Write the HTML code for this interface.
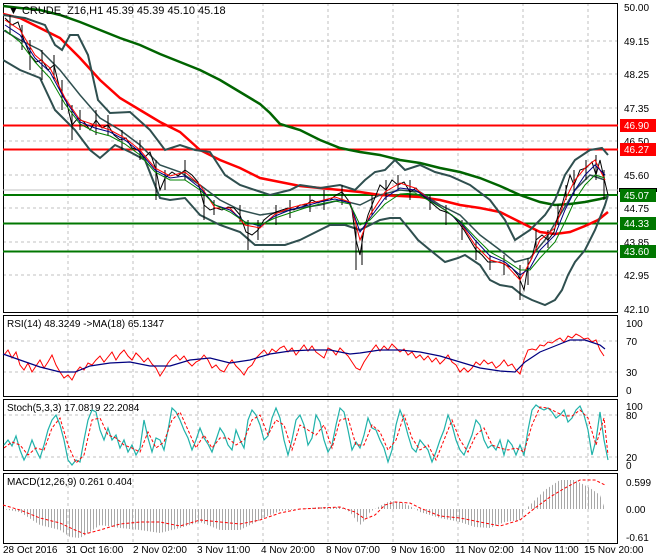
<!DOCTYPE html>
<html><head><meta charset="utf-8"><style>
html,body{margin:0;padding:0;background:#fff;}
svg{display:block;font-family:"Liberation Sans",sans-serif;}
</style></head><body>
<svg width="660" height="560" viewBox="0 0 660 560" xmlns="http://www.w3.org/2000/svg">
<defs>
<pattern id="hist" width="3" height="10" patternUnits="userSpaceOnUse"><rect x="0" y="0" width="1" height="10" fill="#a8a8a8"/></pattern>
<clipPath id="cm"><rect x="3" y="3" width="615" height="309"/></clipPath>
</defs>
<rect width="660" height="560" fill="#fff"/>
<!-- grid -->
<g stroke="#c0c0c0" stroke-dasharray="3,3" stroke-width="1">
<path d="M68 3V312M133 3V312M198 3V312M263 3V312M328 3V312M393 3V312M458 3V312M523 3V312M588 3V312"/>
<path d="M68 315V396M133 315V396M198 315V396M263 315V396M328 315V396M393 315V396M458 315V396M523 315V396M588 315V396"/>
<path d="M68 399V470M133 399V470M198 399V470M263 399V470M328 399V470M393 399V470M458 399V470M523 399V470M588 399V470"/>
<path d="M68 473V543M133 473V543M198 473V543M263 473V543M328 473V543M393 473V543M458 473V543M523 473V543M588 473V543"/>
<path d="M3 41H618M3 74H618M3 108H618M3 141H618M3 175H618M3 208H618M3 242H618M3 275H618"/>
<path d="M3 341H618M3 372H618M3 415H618M3 457H618"/>
</g>
<!-- pane borders -->
<g fill="none" stroke="#000" stroke-width="1">
<rect x="3.5" y="3.5" width="614" height="309"/>
<rect x="3.5" y="315.5" width="614" height="81"/>
<rect x="3.5" y="399.5" width="614" height="71"/>
<rect x="3.5" y="473.5" width="614" height="70"/>
</g>
<g clip-path="url(#cm)" fill="none">
<!-- horizontal levels -->
<path d="M3 125.5H618M3 149.5H618" stroke="#ff0000" stroke-width="2"/>
<path d="M3 195H618M3 223.5H618M3 251.5H618" stroke="#007700" stroke-width="2"/>
<path d="M3 190H618" stroke="#c0c0c0"/>
<!-- MAs -->
<polyline stroke="#006400" stroke-width="2.5" points="3,6 20,8 40,10 60,15 80,22 100,30 120,38 140,45 160,54 180,62 200,70 220,80 240,92 260,104 270,113 280,124 300,130 320,140 340,148 360,152 380,155 400,160 420,163 440,168 460,172 480,178 500,186 520,195 540,202 555,205 570,204 585,202 600,199 608,197"/>
<polyline stroke="#ff0000" stroke-width="2.5" points="3,14 20,18 40,28 60,38 80,58 100,80 120,98 140,110 160,122 180,132 200,150 220,160 240,168 260,178 280,182 300,186 320,188 340,190 360,192 380,195 400,196 420,197 440,200 460,205 480,208 500,212 520,222 540,232 555,234 570,232 585,226 598,220 608,212"/>
<!-- bollinger -->
<polyline stroke="#2f4f4f" stroke-width="2" points="3,15 25,18 45,25 55,45 62,50 70,35 78,35 88,55 98,100 110,113 130,112 150,130 165,150 180,145 195,150 210,152 225,175 240,185 255,190 270,195 290,190 300,185 320,188 340,185 355,190 365,180 375,172 385,170 395,160 405,170 420,165 435,172 450,176 470,185 490,200 505,220 515,240 530,230 545,215 555,200 565,175 575,160 590,150 602,148 608,155"/>
<polyline stroke="#2f4f4f" stroke-width="2" points="3,60 20,70 40,78 55,110 65,120 75,130 90,150 100,158 115,145 130,152 145,160 160,198 170,200 185,198 200,215 220,225 240,232 255,245 270,245 285,245 300,240 310,235 330,225 345,225 360,230 370,225 380,220 390,218 400,218 410,230 418,240 430,250 445,262 458,258 465,255 480,265 490,280 500,285 512,287 522,295 532,300 545,305 555,300 562,290 568,275 575,262 585,250 595,230 605,205 608,195"/>
<polyline stroke="#2f4f4f" stroke-width="1.5" points="3,30 20,40 40,50 60,70 80,95 100,118 120,130 140,145 160,165 180,172 200,185 220,200 240,210 260,215 280,212 300,208 320,205 340,200 360,205 380,195 400,190 420,192 440,205 460,215 480,235 500,250 515,262 530,258 545,240 560,215 575,190 590,175 605,180"/>
<!-- price bars -->
<polyline stroke="#000" stroke-width="1" points="5,18 12,25 18,22 24,40 30,55 36,62 42,60 48,70 54,65 60,90 66,100 72,125 78,118 84,122 90,130 96,120 102,128 108,125 114,135 120,140 126,138 132,148 138,150 144,158 150,152 156,170 160,190 165,178 172,172 178,176 185,170 192,175 198,182 204,205 210,210 216,208 222,210 228,207 234,208 240,215 246,232 252,235 258,230 264,220 270,215 276,212 282,210 288,208 294,210 300,205 306,205 312,200 318,203 324,200 330,200 336,195 342,192 348,200 352,210 356,240 360,255 364,230 368,215 374,200 380,185 386,190 392,180 398,185 404,182 410,192 416,188 422,195 428,200 434,205 440,210 446,212 452,215 458,222 464,230 470,240 476,250 482,255 488,262 494,262 500,262 506,265 512,268 518,275 524,290 528,265 532,258 536,240 542,235 548,240 554,232 558,215 562,205 566,190 570,175 574,185 580,170 586,168 592,162 596,175 600,160 604,178 608,195"/>
<path stroke="#000" d="M10 15V35M22 25V50M30 40V70M42 50V80M54 55V80M62 80V110M72 105V140M80 110V130M96 110V135M108 115V135M122 130V150M140 140V160M156 160V200M165 170V190M185 160V180M204 190V220M214 200V215M240 205V222M248 220V250M258 220V240M276 205V225M290 200V218M310 195V212M324 190V210M342 185V205M356 225V270M362 235V265M372 195V215M386 180V200M398 175V190M410 180V200M430 195V210M446 205V225M462 220V240M476 240V260M490 255V270M504 255V275M520 265V300M528 258V285M536 230V250M548 230V248M558 205V225M566 185V200M574 170V195M586 160V180M596 155V180M604 170V200"/>
<polyline stroke="#ff0000" stroke-width="1" points="5,20 20,30 35,55 50,68 65,98 80,120 95,125 110,130 125,138 140,150 155,168 170,176 185,172 200,185 215,208 230,208 245,225 260,228 275,214 290,208 305,204 320,201 335,197 350,202 360,240 370,215 385,192 400,183 415,188 430,200 445,210 460,222 475,245 490,260 505,264 520,280 530,262 540,240 555,228 565,200 575,180 585,168 595,160 605,180"/>
<polyline stroke="#000080" stroke-width="1" points="5,25 20,35 35,58 50,72 65,100 80,122 95,128 110,132 125,140 140,152 155,170 170,178 185,176 200,188 215,205 230,210 245,222 260,226 275,216 290,210 305,206 320,202 335,199 350,203 360,232 370,218 385,198 400,188 415,190 430,200 445,210 460,222 475,240 490,256 505,262 520,275 530,268 540,250 555,235 565,210 575,190 585,175 595,165 605,175"/>
<polyline stroke="#008000" stroke-width="1" points="5,30 20,42 35,62 50,78 65,104 80,124 95,132 110,136 125,144 140,155 155,172 170,180 185,180 200,190 215,205 230,212 245,222 260,225 275,218 290,213 305,208 320,204 335,201 350,204 360,225 370,220 385,204 400,194 415,193 430,201 445,210 460,221 475,237 490,252 505,260 520,270 530,270 540,258 555,242 565,222 575,200 585,185 595,175 605,178"/>
</g>
<text x="8" y="14" font-size="11" fill="#000">▼ CRUDE_Z16,H1  45.39 45.39 45.10 45.18</text>
<!-- price axis -->
<g font-size="10" fill="#000">
<text x="624" y="11">50.00</text><text x="624" y="45">49.15</text><text x="624" y="78">48.25</text><text x="624" y="112">47.35</text><text x="624" y="145">46.50</text><text x="624" y="179">45.60</text><text x="624" y="212">44.75</text><text x="624" y="246">43.85</text><text x="624" y="279">42.95</text><text x="624" y="313">42.10</text>
</g>
<rect x="619" y="188" width="38" height="4" fill="#000"/>
<rect x="620" y="119" width="36" height="13" fill="#ff0000"/><text x="624" y="129" font-size="10" fill="#fff">46.90</text>
<rect x="620" y="143" width="36" height="13" fill="#ff0000"/><text x="624" y="153" font-size="10" fill="#fff">46.27</text>
<rect x="620" y="189" width="36" height="13" fill="#007700"/><text x="624" y="199" font-size="10" fill="#fff">45.07</text>
<rect x="620" y="217" width="36" height="13" fill="#007700"/><text x="624" y="227" font-size="10" fill="#fff">44.33</text>
<rect x="620" y="245" width="36" height="13" fill="#007700"/><text x="624" y="255" font-size="10" fill="#fff">43.60</text>
<!-- RSI -->
<text x="7" y="327" font-size="10">RSI(14) 48.3249  -&gt;MA(18) 65.1347</text>
<polyline fill="none" stroke="#ff0000" points="4,355 8,350 12,358 16,352 20,365 24,370 28,363 32,372 36,366 40,360 44,368 48,362 52,355 56,365 60,372 64,378 68,375 72,380 76,372 80,367 84,370 88,363 92,365 96,360 100,356 104,362 108,357 112,352 116,360 120,354 124,350 128,356 132,360 136,353 140,357 144,362 148,358 152,364 156,368 160,376 164,370 168,363 172,358 176,355 180,360 184,356 188,362 192,366 196,362 200,360 204,355 208,360 212,368 216,365 220,370 224,372 228,365 232,360 236,366 240,370 244,375 248,368 252,365 256,358 260,354 264,350 268,355 272,349 276,352 280,348 284,346 288,352 292,348 296,355 300,350 304,345 308,351 312,346 316,352 320,355 324,358 328,348 332,350 336,355 340,348 344,352 348,356 352,362 356,368 360,370 364,362 368,356 372,350 376,345 380,351 384,346 388,350 392,344 396,348 400,352 404,349 408,355 412,352 416,358 420,355 424,360 428,356 432,362 436,358 440,364 444,360 448,355 452,362 456,365 460,372 464,368 468,372 472,368 476,362 480,365 484,360 488,364 492,362 496,368 500,365 504,360 508,366 512,364 516,370 520,374 524,360 528,350 532,349 536,350 540,345 544,346 548,342 552,343 556,340 560,338 564,342 568,336 572,338 576,334 580,336 584,339 588,338 592,342 596,340 600,350 604,356"/>
<polyline fill="none" stroke="#000080" stroke-width="1.2" points="3,354 20,360 40,367 60,372 75,372 90,366 110,363 130,362 150,366 170,366 190,360 210,358 230,363 250,360 270,354 290,351 310,350 330,350 350,354 360,353 380,350 400,350 420,352 440,356 460,362 480,368 500,371 515,372 525,362 540,352 555,346 570,340 585,340 600,345 605,349"/>
<g font-size="10"><text x="626" y="327">100</text><text x="626" y="345">70</text><text x="626" y="376">30</text><text x="626" y="394">0</text></g>
<!-- Stoch -->
<text x="7" y="411" font-size="10">Stoch(5,3,3) 17.0819 22.2084</text>
<polyline fill="none" stroke="#20b2aa" stroke-width="1.2" points="4,445 8,440 12,446 16,436 20,450 24,460 28,452 32,440 36,450 40,458 44,445 48,430 52,420 56,415 60,425 64,440 68,460 72,465 76,460 80,462 84,440 88,420 92,410 96,412 100,430 104,440 108,428 112,440 116,435 120,448 124,440 128,452 132,445 136,455 140,448 144,420 148,438 152,452 156,438 160,440 164,450 168,430 172,408 176,412 180,420 184,430 188,438 192,450 196,440 200,428 204,438 208,444 212,452 216,440 220,428 224,434 228,445 232,450 236,430 240,440 244,448 248,420 252,410 256,415 260,425 264,440 268,436 272,418 276,408 280,418 284,440 288,455 292,440 296,420 300,415 304,425 308,445 312,438 316,415 320,422 324,440 328,452 332,445 336,425 340,408 344,412 348,430 352,450 356,442 360,448 364,435 368,418 372,428 376,430 380,440 384,448 388,462 392,450 396,425 400,410 404,420 408,435 412,448 416,452 420,440 424,445 428,450 432,462 436,452 440,440 444,430 448,415 452,425 456,440 460,450 464,455 468,445 472,435 476,420 480,425 484,440 488,448 492,445 496,450 500,440 504,455 508,440 512,445 516,455 520,445 524,455 528,430 532,410 536,405 540,408 544,410 548,408 552,412 556,418 560,415 564,410 568,422 572,418 576,410 580,406 584,415 588,430 592,455 596,440 600,412 604,440 608,460"/>
<polyline fill="none" stroke="#ff0000" stroke-dasharray="3,2" points="4,448 12,442 20,445 28,455 36,448 44,450 52,428 60,418 68,445 76,463 84,455 92,420 100,418 108,435 116,438 124,445 132,448 140,452 148,432 156,448 164,442 172,420 180,412 188,430 196,448 204,435 212,448 220,438 228,438 236,445 244,440 252,420 260,415 268,435 276,420 284,425 292,450 300,425 308,430 316,435 324,425 332,448 340,420 348,418 356,445 364,445 372,425 380,432 388,450 396,440 404,415 412,438 420,450 428,445 436,460 444,440 452,420 460,440 468,452 476,435 484,428 492,445 500,448 508,450 516,448 524,452 532,425 540,407 548,408 556,412 564,416 572,416 580,410 588,418 596,445 604,418 608,455"/>
<g font-size="10"><text x="626" y="410">100</text><text x="626" y="419">80</text><text x="626" y="461">20</text><text x="626" y="469">0</text></g>
<!-- MACD -->
<text x="7" y="485" font-size="10">MACD(12,26,9) 0.261 0.404</text>
<polygon fill="url(#hist)" points="3,509 20,512 40,525 60,530 70,537 80,538 90,532 100,525 120,528 140,530 160,533 180,528 200,522 220,530 240,530 250,525 260,520 270,515 280,511 300,509 320,507 340,507 350,512 360,525 365,520 370,512 380,506 390,501 400,502 410,506 420,512 440,518 460,522 475,527 490,528 505,522 520,520 525,510 535,500 545,490 560,480 575,480 590,488 600,495 605,509"/>
<polyline fill="none" stroke="#ff0000" stroke-dasharray="3,2" points="3,505 20,510 40,518 60,523 75,530 85,534 100,530 120,524 140,522 160,522 180,526 200,520 220,522 240,524 260,520 280,513 300,509 320,508 340,507 355,512 365,519 375,515 385,505 395,502 410,503 420,508 440,516 460,518 480,522 500,526 520,520 535,508 550,497 565,488 580,480 595,480 605,485"/>
<g font-size="10"><text x="626" y="486">0.599</text><text x="626" y="513">0.00</text><text x="626" y="541">-0.61</text></g>
<!-- time axis -->
<g font-size="10" fill="#000">
<text x="3" y="553">28 Oct 2016</text><text x="66" y="553">31 Oct 16:00</text><text x="133" y="553">2 Nov 02:00</text><text x="197" y="553">3 Nov 11:00</text><text x="261" y="553">4 Nov 20:00</text><text x="326" y="553">8 Nov 07:00</text><text x="391" y="553">9 Nov 16:00</text><text x="455" y="553">11 Nov 02:00</text><text x="520" y="553">14 Nov 11:00</text><text x="584" y="553">15 Nov 20:00</text>
</g>
</svg>
</body></html>
